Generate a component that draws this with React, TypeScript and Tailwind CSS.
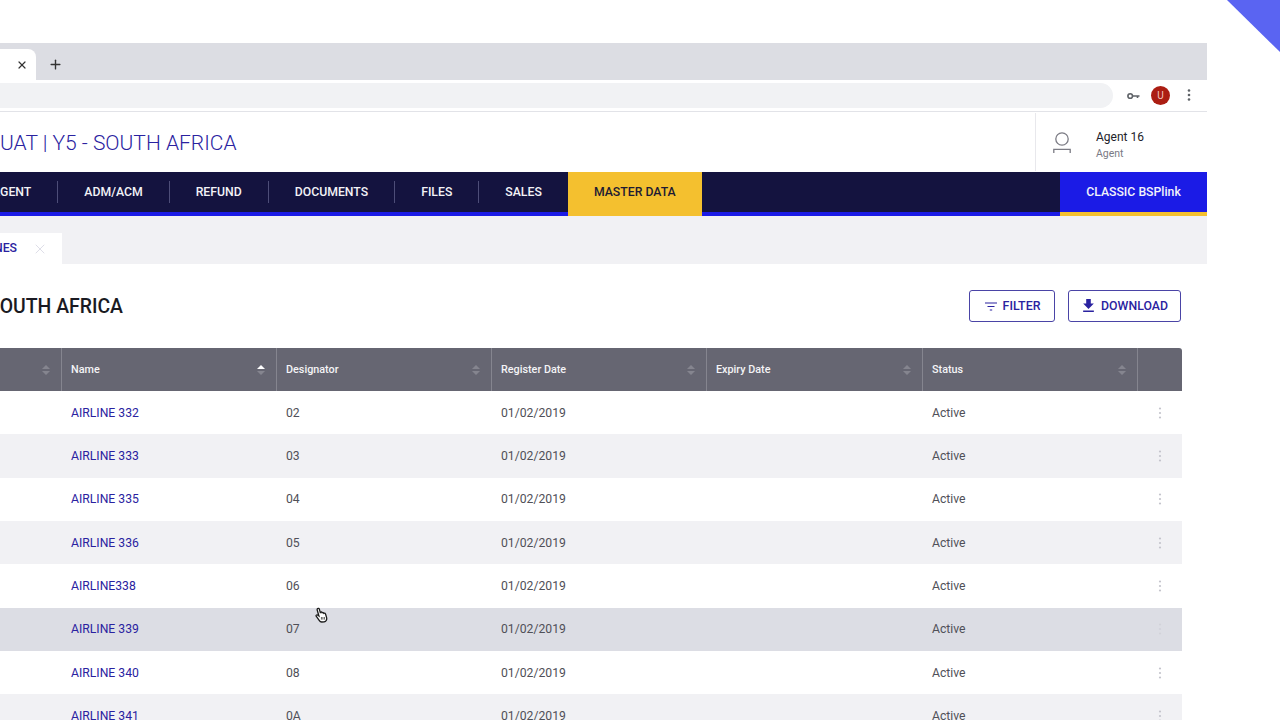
import { Plus, X } from 'lucide-react'

const rows = [
  { name: 'AIRLINE 332', code: '02', bg: 'bg-white' },
  { name: 'AIRLINE 333', code: '03', bg: 'bg-[#f1f1f4]' },
  { name: 'AIRLINE 335', code: '04', bg: 'bg-white' },
  { name: 'AIRLINE 336', code: '05', bg: 'bg-[#f1f1f4]' },
  { name: 'AIRLINE338', code: '06', bg: 'bg-white' },
  { name: 'AIRLINE 339', code: '07', bg: 'bg-[#dcdde4]' },
  { name: 'AIRLINE 340', code: '08', bg: 'bg-white' },
  { name: 'AIRLINE 341', code: '0A', bg: 'bg-[#f1f1f4]' },
]

const navItems = ['ADM/ACM', 'REFUND', 'DOCUMENTS', 'FILES', 'SALES']
const columns = 'grid grid-cols-[62px_215px_215px_215px_216px_215px_44px]'

function SortArrows({ active = false }: { active?: boolean }) {
  return (
    <svg width="10" height="14" viewBox="0 0 10 14" className="shrink-0">
      <path d="M1 6 L5 2 L9 6 Z" fill={active ? '#ffffff' : '#85858f'} />
      <path d="M1 8 L5 12 L9 8 Z" fill="#85858f" />
    </svg>
  )
}

function HeaderCell({ label, active, border = true }: { label?: string; active?: boolean; border?: boolean }) {
  return (
    <div className={`flex items-center justify-between pl-[9px] pr-[10px] ${border ? 'border-r border-[#85858f]' : ''}`}>
      <span className="pt-[2px] text-[10.8px] font-medium text-[#f4f4f6]">{label}</span>
      <SortArrows active={active} />
    </div>
  )
}

function Dots({ color, r = 1.3 }: { color: string; r?: number }) {
  return (
    <svg width="4" height="14" viewBox="0 0 4 14">
      <circle cx="2" cy="2.5" r={r} fill={color} />
      <circle cx="2" cy="7" r={r} fill={color} />
      <circle cx="2" cy="11.5" r={r} fill={color} />
    </svg>
  )
}

export default function App() {
  return (
    <div className="relative h-[720px] w-[1280px] overflow-hidden bg-white pt-[43px] font-['Roboto',sans-serif]">
      {/* corner ribbon */}
      <svg width="53" height="52" viewBox="0 0 53 52" className="absolute right-0 top-0">
        <polygon points="0,0 53,0 53,52" fill="#5a64f2" />
      </svg>

      <div className="w-[1207px]">
        {/* browser tabs */}
        <div className="flex h-[37px] items-end bg-[#dcdde3]">
          <div className="flex h-[31px] w-[36px] items-center justify-end rounded-tr-lg bg-white pr-[8px]">
            <X size={12} strokeWidth={2.4} className="text-[#333]" />
          </div>
          <div className="flex h-[31px] items-center pl-[12px]">
            <Plus size={15} strokeWidth={2.2} className="text-[#333]" />
          </div>
        </div>

        {/* browser toolbar */}
        <div className="flex h-[32px] items-center border-b border-[#e2e3e8] bg-white">
          <div className="h-[25px] w-[1113px] rounded-r-full bg-[#f1f2f4]" />
          <svg width="13" height="8" viewBox="0 0 13 8" className="ml-[14px]">
            <circle cx="3.2" cy="4" r="2.3" fill="none" stroke="#5f6368" strokeWidth="1.6" />
            <path d="M5.5 3.2 H12.5 V4.8 H11.3 V6 H9.7 V4.8 H5.5 Z" fill="#5f6368" />
          </svg>
          <div className="ml-[11px] flex h-[19px] w-[19px] items-center justify-center rounded-full bg-[#ab1d12] text-[10px] text-[#f3c6bf]">
            U
          </div>
          <div className="ml-[17px] -mt-[1px] flex">
            <Dots color="#5f6368" />
          </div>
        </div>

        {/* app header */}
        <div className="flex h-[60px] items-center justify-between bg-white">
          <div className="pt-[4px] text-[21px] font-light text-[#2a22a0]">UAT | Y5 - SOUTH AFRICA</div>
          <div className="flex h-[58px] w-[172px] items-center border-l border-[#e8e8ec] pl-[16px]">
            <svg width="20" height="22" viewBox="0 0 20 22" fill="none" stroke="#7b7b84" strokeWidth="1.3" className="mt-[2px]">
              <circle cx="10" cy="7" r="6.2" />
              <path d="M1.8 21 V17.3 H18.2 V21" />
            </svg>
            <div className="ml-[24px] pt-[5px]">
              <div className="text-[12px] leading-[16px] text-[#22222a]">Agent 16</div>
              <div className="mt-[2px] text-[10.5px] leading-[14px] text-[#7a7a84]">Agent</div>
            </div>
          </div>
        </div>

        {/* main nav */}
        <div className="flex h-[44px] items-stretch bg-[#14133f]">
          <div className="flex border-b-4 border-[#1b1be6]">
            <div className="-ml-[8px] flex items-center pr-[26px] pt-[1px] text-[12.25px] font-medium text-[#f2f2f6]">AGENT</div>
            {navItems.map((item) => (
              <div key={item} className="flex items-center">
                <div className="h-[22px] w-px bg-[#4d4d78]" />
                <div className="px-[26px] pt-[1px] text-[12.25px] font-medium text-[#f2f2f6]">{item}</div>
              </div>
            ))}
          </div>
          <div className="flex w-[134px] items-center justify-center self-stretch bg-[#f4c02f] pb-[3px] text-[12.25px] font-medium text-[#1d1a33]">
            MASTER DATA
          </div>
          <div className="flex-1 border-b-4 border-[#1b1be6]" />
          <div className="flex w-[147px] flex-col bg-[#1b1be6]">
            <div className="flex flex-1 items-center justify-center pt-[1px] text-[12.25px] font-medium text-[#f2f2fa]">CLASSIC BSPlink</div>
            <div className="h-[4px] bg-[#f4c02f]" />
          </div>
        </div>

        {/* open tabs */}
        <div className="flex h-[48px] items-end bg-[#f1f1f4]">
          <div className="flex h-[31px] w-[62px] items-center justify-between overflow-hidden bg-white pr-[14px]">
            <span className="-ml-[6px] text-[12.25px] font-medium text-[#2a22a0]">NES</span>
            <X size={16} strokeWidth={1.2} className="text-[#d6d6e2]" />
          </div>
        </div>

        {/* page title and actions */}
        <div className="flex h-[84px] items-center justify-between pr-[26px]">
          <div className="-ml-[12px] pt-[1px] text-[19.4px] font-medium text-[#1a1a22]">SOUTH AFRICA</div>
          <div className="flex gap-[13px]">
            <button className="flex h-[32px] w-[86px] items-center justify-center gap-[6px] rounded-[3px] border border-[#4a44a6] pl-[1px] text-[12.4px] font-medium text-[#2a22a0]">
              <svg width="12" height="9" viewBox="0 0 12 9" stroke="#2a22a0" strokeWidth="1.2">
                <path d="M0 1 H12 M2.5 4.5 H9.5 M4.8 8 H7.2" />
              </svg>
              FILTER
            </button>
            <button className="flex h-[32px] w-[113px] items-center justify-center gap-[7px] rounded-[3px] border border-[#4a44a6] pl-[2px] text-[12.3px] font-medium text-[#2a22a0]">
              <svg width="11" height="13" viewBox="5 3 14 17" fill="#2a22a0" className="mb-[2px]">
                <path d="M19 9h-4V3H9v6H5l7 7 7-7zM5 18v2h14v-2H5z" />
              </svg>
              DOWNLOAD
            </button>
          </div>
        </div>

        {/* table */}
        <div className="w-[1182px]">
          <div className={`${columns} h-[43px] rounded-tr-[3px] bg-[#666672]`}>
            <HeaderCell />
            <HeaderCell label="Name" active />
            <HeaderCell label="Designator" />
            <HeaderCell label="Register Date" />
            <HeaderCell label="Expiry Date" />
            <HeaderCell label="Status" />
            <div />
          </div>
          {rows.map((row) => (
            <div key={row.name} className={`${columns} h-[43.35px] items-center text-[12.2px] text-[#505058] ${row.bg}`}>
              <div />
              <div className="pl-[9px] text-[#2a22a0]">{row.name}</div>
              <div className="pl-[9px]">{row.code}</div>
              <div className="pl-[9px]">01/02/2019</div>
              <div />
              <div className="pl-[9px]">Active</div>
              <div className="flex justify-center">
                <Dots color={row.name === 'AIRLINE 339' ? '#d2d2da' : '#c4c4cc'} r={1.1} />
              </div>
            </div>
          ))}
        </div>
      </div>

      {/* mouse cursor */}
      <svg width="14" height="16" viewBox="0 0 14 16" className="absolute left-[314px] top-[607px]">
        <path
          d="M3.6 1.6 C4.4 1 5.2 1.5 5.4 2.3 L6.3 5.6 L6.8 5.1 C7.5 4.9 8 5.2 8.2 5.8 C8.9 5.4 9.6 5.7 9.8 6.3 C10.6 6 11.3 6.4 11.6 7.2 L12.6 10.6 C13 12.6 12 14.4 10.2 14.9 L7.7 15 C6.5 15 5.8 14.4 5.2 13.4 L2.2 9.2 C1.7 8.4 2.6 7.5 3.5 8 L4.9 9 L3.2 3 C3 2.4 3.1 2 3.6 1.6 Z"
          fill="#ffffff"
          stroke="#1a1a1a"
          strokeWidth="1.3"
        />
        <path d="M7.4 10 V12.6 M8.9 10 V12.6 M10.4 10 V12.6" stroke="#333" strokeWidth="0.8" />
      </svg>
    </div>
  )
}
